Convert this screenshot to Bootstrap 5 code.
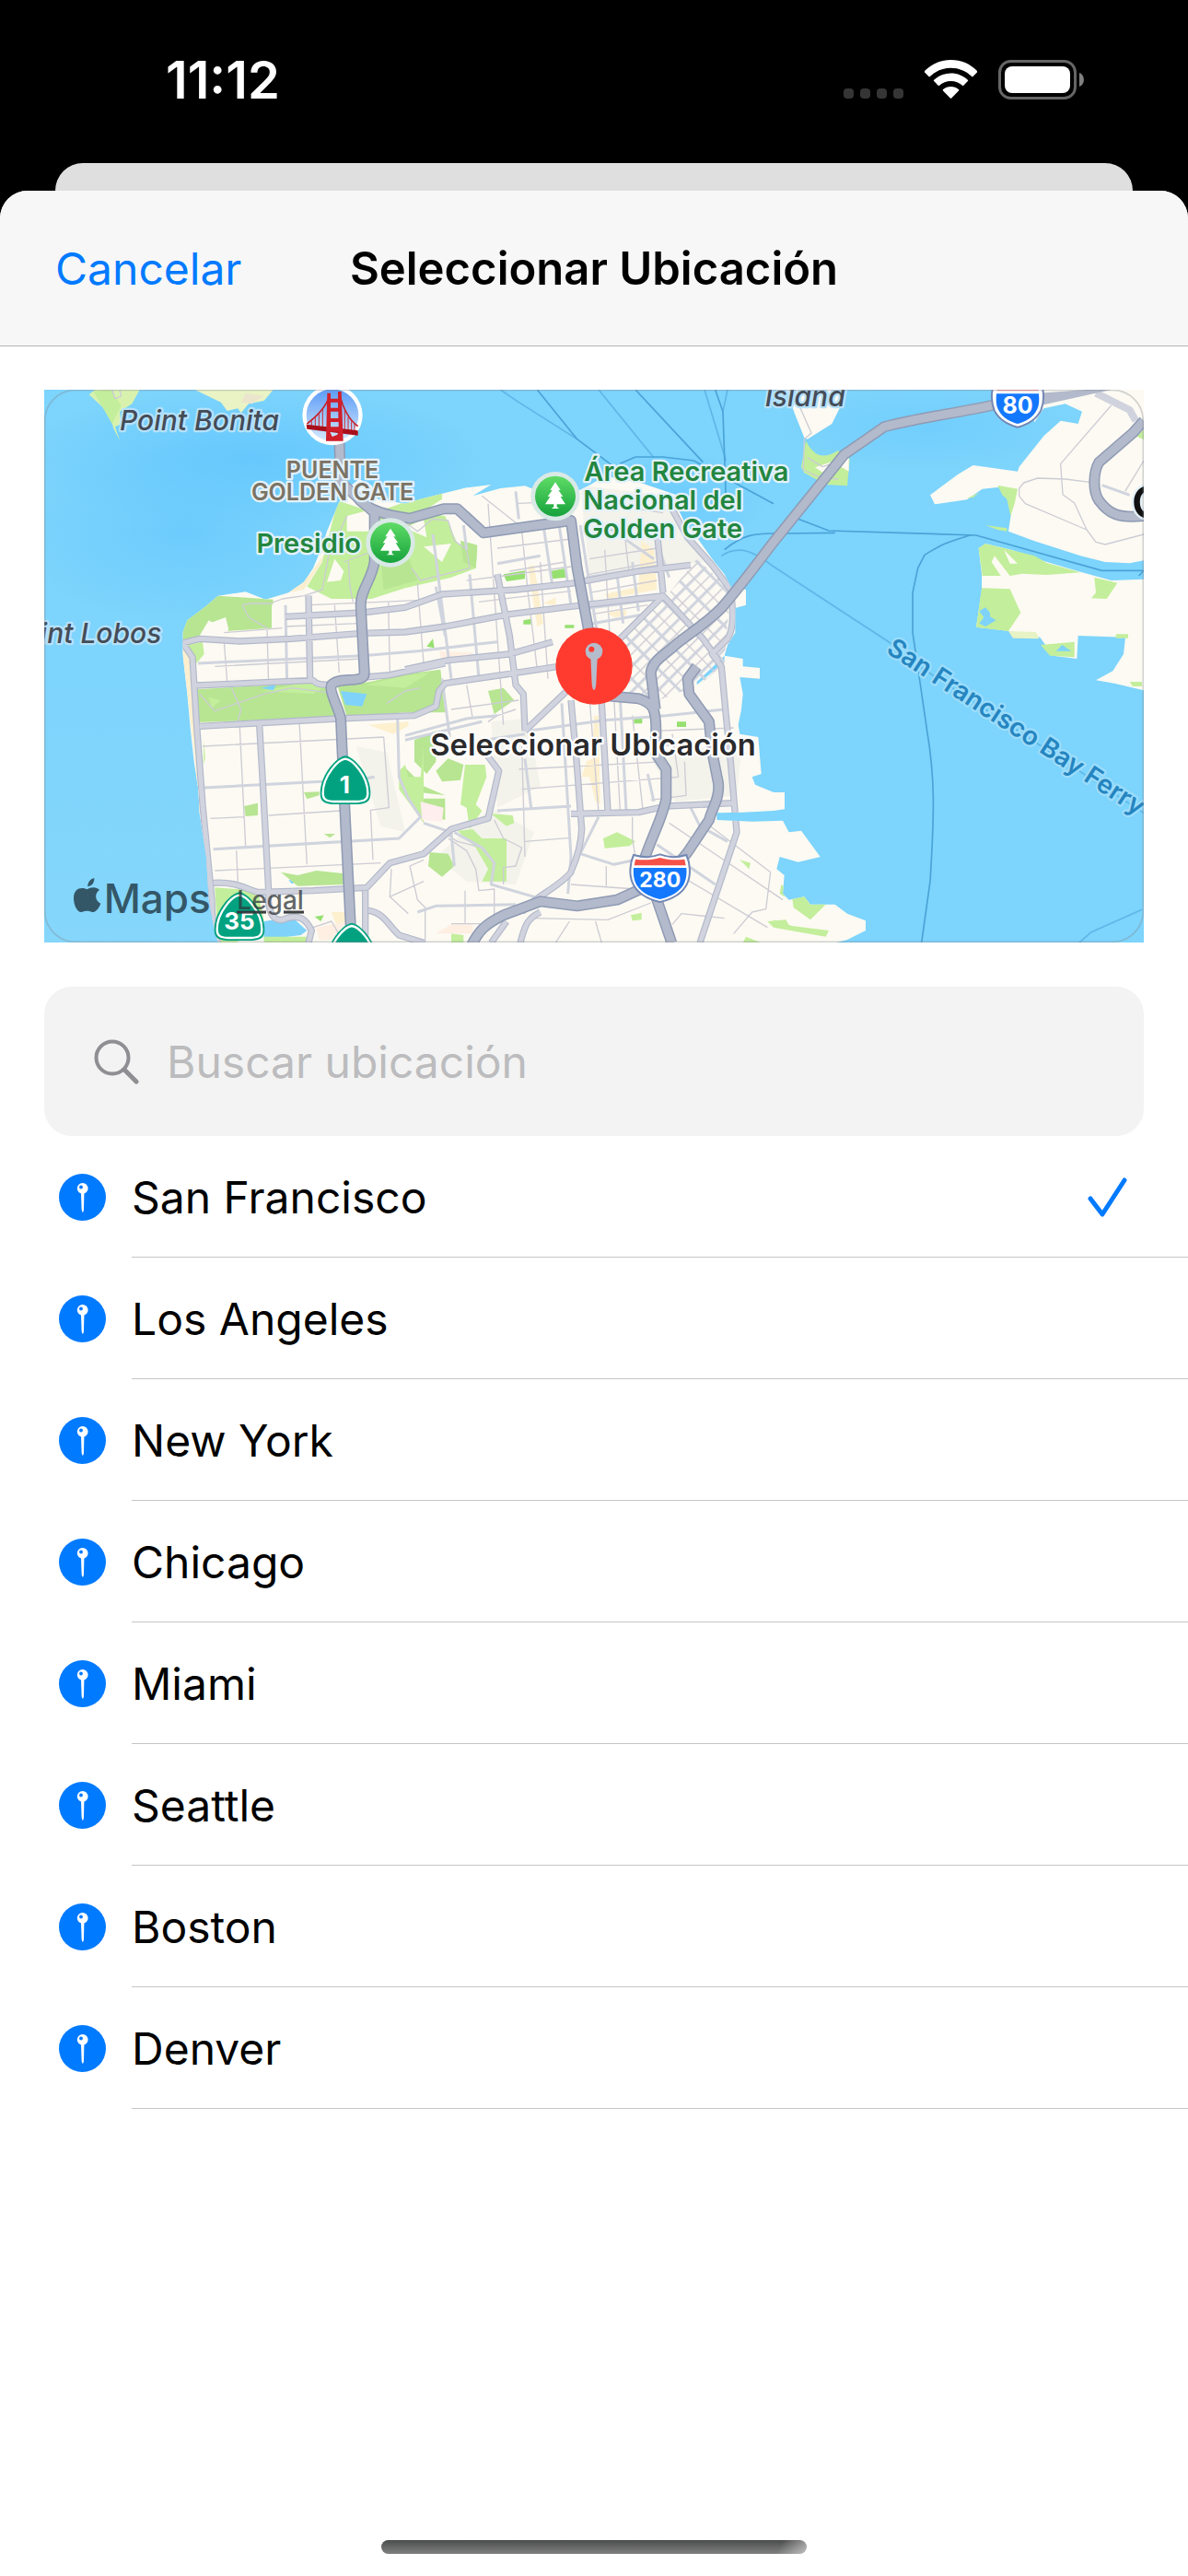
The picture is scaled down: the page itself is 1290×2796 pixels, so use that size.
<!DOCTYPE html>
<html lang="es">
<head>
<meta charset="utf-8">
<meta name="viewport" content="width=device-width, initial-scale=1">
<title>Seleccionar Ubicación</title>
<link href="https://cdn.jsdelivr.net/npm/bootstrap@5.3.0/dist/css/bootstrap.min.css" rel="stylesheet">
<style>
  :root { --tint: #007aff; --hairline: #c6c6c8; }
  body { background: #000; color: #000; font-family: Inter, "Liberation Sans", sans-serif; font-size: 48px; line-height: 60px; }
  .status-bar { height: 177px; padding: 0 113px 4px 180px; }
  .clock { font-size: 56px; font-weight: 600; }
  .status-icons { gap: 23px; }
  .sheet-behind { height: 60px; margin: 0 60px -30px; background: #dfdfdf; border-radius: 30px 30px 0 0; }
  .sheet { border-radius: 30px 30px 0 0; overflow: hidden; position: relative; }
  .sheet-nav { display: grid; grid-template-columns: 1fr auto 1fr; height: 169px; padding: 2px 60px 0; background: #f7f7f7; border-bottom: 1px solid #b2b2b4; }
  .btn-cancel { justify-self: start; color: var(--tint); font-size: 48px; line-height: 60px; }
  .sheet-title { font-size: 49px; line-height: 60px; font-weight: 600; }
  .sheet-body { padding: 47px 48px 0; }
  .map-view { display: block; width: 100%; height: auto; }
  .search-field { margin-top: 48px; height: 162px; padding: 0 54px; gap: 30px; background: #f3f3f3; border-radius: 30px; }
  .search-field input { padding: 2px 0 0; font-size: 48px; line-height: 60px; color: #000; outline: 0; }
  .search-field input::placeholder { color: #bcbcbe; opacity: 1; }
  .place { height: 132px; padding: 0 0 0 64px; gap: 28px; background: #fff; border: 0; color: #000; text-align: left; }
  .place-text { border-bottom: 1px solid var(--hairline); padding: 2px 66px 0 0; }
  .home-bar { width: 462px; height: 15px; margin-bottom: 24px; border-radius: 8px; background: linear-gradient(115deg, transparent 93%, #ffffff80), linear-gradient(#4b4d4c, #808080); }

  .park { fill: #c3ee9b; } .park-dark { fill: #b7e592; } .shop { fill: #fdf0cf; } .land { fill: #fcfaf2; } .lake { fill: #7fd3fb; }
  .rd { fill: none; stroke-linejoin: round; }
  .thin { stroke: #cdccd5; stroke-width: 4; }
  .minor { stroke: #d0d4de; stroke-width: 9; }
  .ferry { fill: none; stroke: #4aa3d8; stroke-width: 5; stroke-linejoin: round; }
  .lbl { font-family: Inter, "Liberation Sans", sans-serif; font-weight: 600; paint-order: stroke; stroke: #e3f1fa; stroke-width: 14; stroke-linejoin: round; }
  .sea-lbl { font-size: 90px; font-style: italic; font-weight: 500; fill: #454c57; stroke: #b5e1fa; }
  .park-lbl { font-size: 87px; fill: #22863f; }
  .shield-lbl { font-family: Inter, "Liberation Sans", sans-serif; font-weight: 700; fill: #fff; text-anchor: middle; }
</style>
</head>
<body class="d-flex flex-column min-vh-100">

<svg width="0" height="0" class="position-absolute" aria-hidden="true">
  <symbol id="pin" viewBox="0 0 51 51">
    <circle cx="25.500" cy="25.500" r="25.500" fill="#007aff"/>
    <path d="M24 21h3.400l-.4 17c-.2 5-2.100 5-2.400 0z" fill="#fff"/>
    <circle cx="25.700" cy="15.800" r="5.900" fill="#fff"/>
    <circle cx="24" cy="14.500" r="1.900" fill="#007aff"/>
  </symbol>
</svg>

<header class="status-bar d-flex align-items-center justify-content-between text-white">
  <span class="clock">11:12</span>
  <div class="status-icons d-flex align-items-center">
    <svg width="65" height="43" viewBox="0 0 65 43" fill="#353535" aria-hidden="true"><rect y="31" width="11" height="11" rx="4"/><rect x="18" y="31" width="11" height="11" rx="4"/><rect x="36" y="31" width="11" height="11" rx="4"/><rect x="54" y="31" width="11" height="11" rx="4"/></svg>
    <svg width="57" height="43" viewBox="0 0 57 43" fill="#fff" aria-hidden="true">
      <path d="M28.500 0C39.600 0 49.700 4.300 57 12c.4.400.4 1 0 1.400l-4.500 4.700c-.4.400-.9.400-1.300 0C45.200 12.200 37.200 8.800 28.500 8.800S11.800 12.200 5.800 18.100c-.4.400-.9.400-1.300 0L0 13.400c-.4-.4-.4-1 0-1.400C7.300 4.300 17.400 0 28.500 0z"/>
      <path d="M28.500 14.600c7.100 0 13.500 2.700 18.300 7.100.5.400.5 1 .1 1.400l-4.600 4.700c-.4.400-.9.400-1.300 0-3.400-3-7.700-4.700-12.500-4.700S19.400 24.800 16 27.800c-.4.400-.9.400-1.300 0l-4.600-4.700c-.4-.4-.4-1 .1-1.400 4.800-4.400 11.200-7.100 18.300-7.100z"/>
      <path d="M28.500 29c3.200 0 6.100 1.100 8.400 3 .5.400.5 1 .1 1.400l-7.800 8.100c-.4.400-1 .4-1.400 0L20 33.400c-.4-.4-.4-1 .1-1.400 2.300-1.900 5.200-3 8.400-3z"/>
    </svg>
    <svg width="93" height="43" viewBox="0 0 93 43" aria-hidden="true"><rect x="1.500" y="1.500" width="82" height="40" rx="12" fill="none" stroke="#666" stroke-width="3"/><rect x="7" y="7" width="71" height="29" rx="8" fill="#fff"/><path d="M88 14c6.500 2 6.500 13 0 15z" fill="#808080"/></svg>
  </div>
</header>
<div class="sheet-behind"></div>

<main class="sheet bg-white d-flex flex-column flex-grow-1">
  <div class="sheet-nav align-items-center">
    <button type="button" class="btn btn-cancel border-0 p-0">Cancelar</button>
    <h1 class="sheet-title m-0">Seleccionar Ubicación</h1>
  </div>

  <div class="sheet-body">
    <svg class="map-view" viewBox="24 39 3582 1800" role="img" aria-label="Mapa de San Francisco">
      <defs>
        <radialGradient id="sea"><stop offset="0" stop-color="#66c8fd"/><stop offset="1" stop-color="#66c8fd" stop-opacity="0"/></radialGradient>
        <linearGradient id="shoal" x2="0" y2="1"><stop offset="0" stop-color="#8bd8fa" stop-opacity="0"/><stop offset="1" stop-color="#8bd8fa"/></linearGradient>
        <linearGradient id="tree" x2="0" y2="1"><stop offset="0" stop-color="#5fdc66"/><stop offset="1" stop-color="#16a23c"/></linearGradient>
        <linearGradient id="sky" x2="0" y2="1"><stop offset="0" stop-color="#5b9bf5"/><stop offset="1" stop-color="#d6eaff"/></linearGradient>
        <clipPath id="coast"><path d="M985 405L970 440 945 500 925 560 900 620 870 665 820 700 770 715 745 722 680 697 590 710 550 745 490 790 475 830 475 900 490 1030 500 1140 512 1250 526 1340 530 1420 552 1560 560 1700 575 1780 590 1840H2600L2640 1830 2700 1800V1768L2640 1745 2600 1715 2520 1715 2500 1690 2450 1700 2430 1680 2435 1620 2410 1600 2420 1560 2480 1577 2552 1560 2490 1475 2450 1480 2430 1442 2330 1445 2215 1440V1417L2300 1415 2400 1410 2436 1405V1350L2400 1350 2340 1325 2330 1300 2360 1290 2350 1170 2290 1160 2285 1130 2295 1080 2300 1030 2290 975 2355 980V945L2300 940V915L2240 905 2250 870 2275 830V750L2310 740V690L2260 680 2240 640 2200 590 2150 520 2110 470 2090 430 2080 380 2020 360 1960 340 1850 320 1800 350 1770 365 1700 370 1640 372 1590 352 1510 360 1420 385 1480 348 1400 358 1330 375 1250 395 1200 410 1110 395 1090 350 1050 330 1000 370Z"/></clipPath>
        <clipPath id="soma"><path d="M2040 725L2150 590 2260 690 2245 850 2240 930 2160 1000 2000 1060 1880 1000 1880 880Z"/></clipPath>
        <pattern id="blocks" width="84" height="58" patternUnits="userSpaceOnUse" patternTransform="rotate(-45)"><path d="M0 5H84" stroke="#cfd3de" stroke-width="9"/><path d="M0 34H84M44 0V58" stroke="#cdccd5" stroke-width="4"/><path d="M5 0V58" stroke="#cfd3de" stroke-width="9"/></pattern>
        <g id="treepin"><circle r="80" fill="#d9e9e6"/><circle r="66" fill="url(#tree)"/><path d="M0-46L17-20H10L25 1H17L33 26H5V35L13 40H-13L-5 35V26H-33L-17 1H-25L-10-20H-17Z" fill="#fff"/></g>
        <g id="state"><path d="M0-82C26-80 82-22 82 40 82 66 70 74 40 76H-40C-70 74-82 66-82 40-82-22-26-80 0-82Z" fill="#02a280"/><path d="M0-72C22-70 73-18 73 40 73 60 62 66 38 67H-38C-62 66-73 60-73 40-73-18-22-70 0-72Z" fill="none" stroke="#fff" stroke-width="7"/></g>
        <g id="interstate"><path d="M-86-76C-50-66-30-68 0-78 30-68 50-66 86-76 98-50 102-10 88 18 70 56 30 70 0 77-30 70-70 56-88 18-102-10-98-50-86-76Z" fill="#fff" stroke="#7287b4" stroke-width="6"/><path d="M-80-62C-50-58-25-60 0-67 25-60 50-58 80-62L84-42H-84Z" fill="#f65248"/><path d="M-86-34H86C88-10 84 8 76 22 58 50 25 62 0 68-25 62-58 50-76 22-84 8-88-10-86-34Z" fill="#1478fe"/></g>
        <path id="freeways" d="M985 200L990 340 1100 440V600C1090 660 1055 690 1055 740L1067 960C1070 1000 985 970 960 1000 950 1020 985 1080 990 1110L1003 1400 1025 1840M1040 385C1080 440 1160 450 1215 458L1325 427H1370L1455 505 1740 465 1760 620 1795 810 1815 940M1850 1035L1960 1045C2010 1060 2018 1080 2017 1160V1225L2050 1275V1370C2040 1430 2000 1500 1975 1580L2020 1700 2068 1840M2000 1650L1890 1700 1760 1720 1640 1705 1520 1750C1460 1780 1440 1800 1415 1850M2060 1620L2120 1545 2190 1440C2200 1400 2225 1370 2220 1320L2200 1220 2190 1120 2125 1030 2120 980 2150 940M2015 1080L2000 960C2005 920 2050 900 2080 870 2130 830 2180 800 2230 750 2300 670 2380 560 2400 535L2630 250 2760 160C2870 130 3000 115 3110 90L3250 60M3606 140L3570 180 3460 275C3440 310 3440 370 3460 400 3490 440 3520 460 3606 450"/>
        <path id="avenues" d="M470 865L530 850 660 858 830 850 1060 832 1200 828 1330 810 1540 770 1740 745 2040 710M480 870L507 910 520 1120 540 1390 570 1700C570 1760 575 1800 590 1840M520 1002L900 985C910 1000 930 1000 960 1000M1070 975L1150 968 1330 930M530 1135L980 1110 1230 1100 1300 1070 1310 1020 1330 995 1500 970 1700 940M725 1130L735 1300 755 1670M575 1645C650 1640 680 1665 720 1675L900 1670 1075 1660 1150 1580 1260 1550 1350 1470 1470 1435 1505 1280 1460 1220M1070 1670V1840M1080 1735C1130 1740 1150 1790 1180 1815L1260 1840M755 1670C750 1740 770 1770 800 1765 860 1740 880 1770 895 1800L885 1840M810 778L1060 765 1200 748 1320 705 1560 690 1740 670 1960 630 2130 610M885 710L890 985M1200 950L1340 920 1540 900 1680 860M1500 640L1540 840 1560 1000 1585 1030 1590 1150M1590 1150L1800 950 2040 710 2170 850 2220 920M2020 500L2040 700M2060 410L2120 520 2200 610 2260 690C2270 770 2270 820 2250 850L2200 900 2230 940 2245 1100 2260 1250 2280 1480 2160 1840M1740 1050L1760 1270 1775 1470C1770 1560 1740 1600 1740 1610 1700 1660 1620 1690 1580 1740M1840 1060L1860 1410M1740 1420L1960 1415 2050 1395 2270 1385M1640 1740C1600 1760 1590 1780 1575 1840M1530 1770L1480 1840"/>
      </defs>

      <!-- water -->
      <path d="M0 0H3640V1860H0Z" fill="#7dd4fc"/>
      <ellipse cx="700" cy="260" rx="760" ry="230" fill="url(#sea)"/>
      <ellipse cx="480" cy="500" rx="560" ry="300" fill="url(#sea)" opacity=".7"/>
      <ellipse cx="2900" cy="160" rx="500" ry="140" fill="url(#sea)" opacity=".5"/>
      <ellipse cx="2080" cy="400" rx="300" ry="160" fill="url(#sea)" opacity=".7"/>
      <path d="M24 1000H600V1840H24Z" fill="url(#shoal)" opacity=".6"/>

      <!-- ferry lines -->
      <path class="ferry" d="M1630 39L1760 200 1880 290M1950 39L2170 275M1900 280L1950 258H2040L2140 270 2400 410M2210 39L2235 110 2245 400M2480 460L2580 498 3060 513 3470 628H3606L3590 645M2440 507L2600 505M2240 560C2300 510 2340 507 2400 507M3040 513C2970 535 2950 540 2892 577L2870 620 2853 700V830L2868 930 2900 1150C2925 1300 2925 1400 2910 1640L2882 1840"/>
      <path class="ferry" opacity=".6" d="M1510 39L1570 80 1760 200M1830 39L2010 260M2175 39L2245 270M2250 39L2235 110M2230 580C2290 540 2340 570 2400 615L2790 870M2860 930L3606 1418M3395 1840L3435 1805 3600 1732"/>

      <!-- marin headlands -->
      <path d="M170 55L190 39H335L310 85 270 110 275 150 255 160 270 205 250 165 235 115Z" fill="#d8f2ae"/>
      <path d="M185 45L240 39 275 90 245 150Z" class="park"/>
      <path d="M515 39H770L740 75 690 85 665 115 655 100 620 108 600 80Z" fill="#e9f3c4"/>
      <path d="M680 50L740 60 700 85 665 80Z" fill="#ebe5cd"/>
      <path class="rd thin" d="M245 39L255 68 275 60 270 39"/>

      <!-- treasure island -->
      <path class="land" d="M2440 39L2470 120 2500 195 2510 200 2590 150 2620 90 2640 39Z"/>
      <path class="park" d="M2505 205C2530 255 2560 268 2610 237L2648 265 2640 352 2570 348 2500 310 2490 290Z"/>
      <path class="land" d="M2535 292L2600 270 2645 240V305L2620 290 2570 315Z"/>
      <path class="rd thin" d="M2470 60L2523 180 2500 200 2497 300 2540 320 2610 330M2510 260L2560 290 2620 270"/>

      <!-- east bay -->
      <path class="land" d="M3230 39L3250 145 3280 100 3350 85 3405 110 3392 150 3335 140 3280 190 3200 290 3195 305 3050 285 3000 315 2910 382 2925 412 3030 397 3080 362 3150 355 3180 400 3165 500 3250 532 3400 580 3480 600 3560 604 3606 595V39Z"/>
      <path class="park" d="M3130 350L3195 362 3185 410 3172 450 3160 395 3145 382ZM3090 480L3160 490V500L3130 495ZM3030 392L3070 375 3050 390ZM3580 190L3606 170V202Z"/>
      <path class="rd thin" d="M3500 90L3335 280 3342 380 3380 408 3420 495 3450 535 3480 543 3606 510M3420 495L3220 410 3200 385V360L3215 342 3260 327 3350 330 3430 340M3606 270L3545 370"/>
      <path class="rd minor" d="M3470 350L3560 382"/>
      <path class="rd" stroke="#d0d3de" stroke-width="24" d="M3450 50L3560 105 3580 140"/>
      <path class="land" d="M3068 555L3090 540 3180 562 3290 600 3400 632 3500 660 3606 656V1018L3510 995 3450 985 3505 955 3540 900 3546 845 3392 840 3388 915 3310 905 3268 845 3170 825 3060 812 3078 690V640Z"/>
      <path class="park" d="M3068 555L3090 540 3250 580 3290 603 3400 634 3290 642 3210 638 3170 645 3120 580 3110 600 3140 645H3080ZM3078 685L3170 688 3205 765 3165 825 3060 812ZM3445 650L3520 668 3485 720 3435 718 3450 700ZM3270 870L3380 860V910L3300 905ZM3515 835H3555V848H3515ZM3560 990H3600V1005H3570Z"/>
      <path fill="#e7f3c4" d="M3165 825L3255 828 3265 850 3180 848Z"/>
      <path class="land" d="M3150 560L3195 605 3170 605Z"/>
      <path class="lake" d="M3070 760L3090 748 3105 765V778L3125 790 3090 810 3070 800 3085 780ZM3320 890L3340 870 3370 890Z"/>

      <!-- san francisco -->
      <g clip-path="url(#coast)">
        <path class="land" d="M400 300H2750V1840H400Z"/>
        <path fill="#f0f0e8" opacity=".7" d="M1040 1200L1140 1220 1200 1480 1120 1460ZM1480 1120L1600 1110 1640 1330 1500 1400ZM1300 1560L1480 1400 1620 1480 1560 1650 1400 1640ZM2000 1240L2300 1180 2280 1360 2080 1380ZM1770 350L2020 380 2180 600 1800 640Z"/>
        <path fill="#fbefcf" d="M985 400L960 540 890 640 820 700 870 690 930 600 990 480ZM470 860L515 1240 528 1420 540 1420 500 900Z"/>
        <path class="park" d="M980 400L1100 440 1240 390 1320 370 1320 395 1250 440 1330 450 1370 540 1435 560 1430 620 1350 650 1200 685 1090 720H960L880 680 930 600Z"/>
        <path class="park-dark" d="M1120 590L1200 560 1240 660 1130 690ZM1380 530L1435 545 1430 620 1390 600Z"/>
        <path class="land" d="M1010 450L1085 430V500H1010ZM970 590L1000 630 990 660 945 665ZM1260 550L1350 540 1320 600ZM1200 490L1260 460 1270 520Z"/>
        <path class="park-dark" d="M475 800L590 710 770 722 765 815 620 825 560 790 530 840 475 860Z"/>
        <path class="land" d="M765 740L820 700 900 690V850H765ZM560 800L615 780 625 820 600 850H550Z"/>
        <path class="park" d="M490 870L540 860 545 900 520 930Z"/>
        <path class="park-dark" d="M522 1015L880 992 960 1005 985 1105 528 1122ZM980 1005L1085 990 1200 965 1315 950 1330 1090 1200 1090 1010 1103Z"/>
        <path class="park" d="M730 1020L880 992 940 1005 900 1030ZM1070 1000L1200 970 1280 960 1200 1010ZM560 1040L600 1050 570 1075Z"/>
        <path class="lake" d="M730 1010L780 998 770 1018ZM990 1020L1075 1030 1060 1070 1005 1065ZM820 1635L850 1640 830 1648ZM740 1770L830 1755 880 1800 860 1815 740 1830ZM2150 990L2240 905V925L2150 1000ZM1200 1340H1240L1230 1355H1200Z"/>
        <path class="park-dark" d="M795 1610L850 1620 910 1605 1005 1615V1650L850 1655ZM675 1395L720 1385V1425L680 1428ZM870 1350L920 1348V1360L880 1372ZM935 1485H972L955 1498ZM1280 1545L1340 1550 1360 1590 1320 1625 1275 1590ZM1470 1020L1520 1010 1555 1050 1490 1095ZM1230 1180L1300 1150V1250L1270 1290 1230 1250ZM1200 1270L1260 1330 1330 1360 1200 1345ZM1300 1280L1340 1240 1390 1260 1380 1310 1320 1315ZM1240 1370L1330 1370 1330 1440 1250 1420Z"/>
        <path class="park" d="M1180 1280L1200 1260 1210 1300 1250 1300 1260 1200V1450L1180 1340ZM1395 1260L1460 1260 1465 1300 1430 1390 1450 1410 1410 1470 1400 1400 1380 1390ZM1480 1420L1550 1425 1555 1450 1530 1460ZM1370 1475L1420 1470 1450 1500 1530 1500V1640L1450 1640 1470 1600 1430 1530ZM1845 1500L1890 1480 1950 1510 1930 1525 1850 1532ZM580 1660L720 1670 740 1770 650 1840H590ZM740 1820L880 1820V1840H740ZM1935 1750L1970 1742V1765L1940 1768ZM2380 1770L2440 1765 2460 1800 2400 1790ZM2310 1820L2360 1840H2300ZM2290 1570L2325 1580 2320 1600ZM2420 1560L2450 1580 2470 1600 2550 1595 2490 1612 2445 1600ZM2425 1650L2445 1665 2435 1690 2420 1680ZM2460 1690L2500 1680 2520 1715 2575 1710 2520 1765 2465 1725ZM2400 1765L2460 1785 2580 1800 2570 1820 2400 1790ZM545 1180L548 1240 542 1260ZM1350 1810L1390 1815V1840H1350Z"/>
        <path fill="#96e070" d="M1520 640L1590 628V655L1530 663ZM1670 630L1725 620V650L1680 655ZM1585 790L1610 785V803H1585ZM1945 1110H1972V1126H1945ZM2085 1120H2115V1137H2085ZM1720 805H1750V815H1720ZM1270 875L1290 850 1295 880ZM905 1755L935 1750 925 1770Z"/>
        <path class="shop" d="M1970 530L2010 560 2020 690 1860 720 1850 705 1960 680ZM1600 615L1620 610 1650 800 1630 810ZM1650 735L1690 715V740ZM1855 765L1920 755V775L1880 780ZM1815 1100L1830 1100 1835 1390 1820 1380 1800 1300 1775 1300 1790 1250 1810 1240ZM1645 1080L1700 1030 1690 1070ZM1080 1130L1210 1120V1135L1160 1160ZM960 1740H1010V1780H975Z"/>
        <path fill="#feefe2" d="M910 1790L1010 1770V1830H920ZM1310 890L1420 895 1410 920 1320 920ZM1350 1780H1420V1810H1300Z"/>
        <path fill="#ffeeee" d="M1250 1380L1325 1400 1320 1445 1255 1440Z"/>

        <path class="rd thin" d="M580 940L1060 915M610 860L620 990M660 1120L680 1525M750 820L755 1000M855 1120L880 1585M540 1200L1130 1170M565 1435L675 1430M755 1425L990 1410M580 1605L1120 1580M650 1540L655 1640M610 830L800 815M890 740L1240 725M890 775L1000 770M970 740L985 960M1145 730L1150 960M810 810L1050 800M1130 1170L1147 1400 1087 1408 1095 1570M1240 670L1260 930M1470 410L1520 1130M1400 660L1520 645 1740 615M1600 700L1630 950M1640 600L1665 980M1580 500L1600 700M1560 410L1740 400M1450 385L1570 480M1500 555L1740 525M1440 730L1560 715 1740 695M1540 630L1720 600M1800 590L2020 555M1800 640L2020 600M1850 560L1870 900M1910 470L1930 640M1800 700L2020 660M1810 770L1990 740M1780 400L2040 440M1700 900L1830 880M1340 1000L1560 970M1400 1000L1420 1110M1350 1080L1570 1050M1580 1200L1590 1560M1580 1340L2090 1300M1570 1275L2050 1250M1590 1510L1740 1498M1880 1040L1900 1410M1800 1040L1830 1415M1940 1100L1975 1415M2010 1150L2270 1140M2010 1200L2270 1185M2070 1160L2090 1300M2110 1250L2115 1360 2000 1375M2060 1450L2430 1700M1740 1650L1950 1665M1855 1590V1655M2060 1600L2380 1790M2180 1450L2390 1610 2375 1730 2330 1740 2270 1810M2070 1780L2100 1745 2240 1760M1260 1570L1215 1590 1240 1700 1265 1725V1840M1340 1500L1400 1540 1430 1600 1440 1670 1490 1665V1770M1340 1490L1370 1510 1450 1530M1490 1440L1520 1500 1580 1530 1560 1590 1520 1595V1650M1350 1778H1500M1395 1670V1775M1620 1760L1860 1765 2000 1710M1735 1770L1690 1840M1820 1770L1840 1840M1940 1430V1500L1950 1560M670 740L700 735 760 735 800 720 870 710 930 690 950 580 1010 450M670 740L690 780 750 815M1015 600L1020 680 1030 730M1000 600L1080 570M1200 470L1240 500 1290 460 1340 465 1360 530 1400 560 1410 620 1250 660 1220 620M530 1030L580 1085 740 1030 830 1010 950 1025M630 1000L665 1080 655 1120M1140 1060L1200 1020 1250 1010M1150 1690L1260 1640M1155 1600L1150 1690 1210 1745M900 1790L960 1770 1000 1840M1470 1120L1500 1100 1560 1080"/>
        <path class="rd minor" d="M525 930L1060 905 1240 890 1500 860M545 1335L930 1315M1020 1315L1100 1300M575 1535L1180 1500 1250 1430 1210 1370 1180 1300 1175 1105M810 740L815 1000M1290 510L1350 980M1390 480L1400 560M1560 370L1570 460M1650 480L1680 680M1700 470L1740 740M1500 605L1640 580M1410 640L1440 980M1320 980L1345 1170M1200 1165L1400 1110 1500 1100M1600 1150L1850 1115 2050 1100 2240 1080M1710 1060L1740 1560 1730 1680M1900 1040L1920 1410M1770 480L1830 860M1590 1240L1610 1400M1460 1180L1590 1160M1500 1410L1740 1395M1360 1590L1350 1480 1260 1450M1480 1420L1430 1450M1990 1290L2010 1380M1830 1430L1770 1550 1880 1585 1950 1570M2130 1400L2160 1460 2250 1510M2020 1520L2210 1650M1240 1740L1300 1720 1560 1715M1360 1480L1450 1530 1490 1580 1480 1650 1620 1690M1940 600L1960 760M1890 640L1910 800M1790 650L2040 610M1800 750L2030 720M1810 800L1980 770M1760 1000L1920 960M1200 1180L1450 1120M1850 480L2010 590M2000 480L2060 650M1300 680L1330 840"/>
        <path d="M1840 560H2280V1080H1840Z" fill="url(#blocks)" clip-path="url(#soma)"/>
        <use href="#avenues" fill="none" stroke="#b3b9ca" stroke-width="22" stroke-linejoin="round"/>
        <use href="#avenues" fill="none" stroke="#d1d3df" stroke-width="15" stroke-linejoin="round"/>
      </g>
      <use href="#freeways" fill="none" stroke="#8f9ab4" stroke-width="36" stroke-linejoin="round"/>
      <use href="#freeways" fill="none" stroke="#b2bacb" stroke-width="27" stroke-linejoin="round"/>
      <path d="M3200 55L3420 39H3500L3270 90Z" fill="#b2bacb"/>

      <!-- golden gate bridge -->
      <circle cx="963" cy="122" r="98" fill="#fff"/>
      <circle cx="963" cy="122" r="85" fill="url(#sky)"/>
      <path d="M880 150C920 120 945 90 955 55M880 158L1045 180M985 50C1000 110 1020 140 1046 158" fill="none" stroke="#c8202a" stroke-width="5"/>
      <path d="M895 140V165M907 130V166M919 118V166M931 100V168M1003 105V175M1014 128V176M1025 142V177M1035 150V178" stroke="#d22a32" stroke-width="3"/>
      <path d="M878 152L945 160 1046 172V188L940 175 880 167Z" fill="#a90f1b"/>
      <path d="M946 50H957V68H981V45H992L998 206H942ZM957 80V98H981V80ZM957 110V132H982V110ZM957 144V160H983V144ZM955 176L962 192 978 186 984 176Z" fill="#d01f2a" fill-rule="evenodd"/>

      <text class="lbl sea-lbl" x="270" y="170">Point Bonita</text>
      <text class="lbl sea-lbl" x="406" y="863" text-anchor="end">Point Lobos</text>
      <text class="lbl sea-lbl" x="2372" y="92">Island</text>
      <g class="lbl" font-size="75" text-anchor="middle" fill="#7b7364"><text x="963" y="326">PUENTE</text><text x="963" y="400">GOLDEN GATE</text></g>
      <text class="lbl park-lbl" x="1056" y="570" text-anchor="end">Presidio</text>
      <g class="lbl park-lbl"><text x="1783" y="335">Área Recreativa</text><text x="1780" y="428">Nacional del</text><text x="1780" y="521">Golden Gate</text></g>
      <use href="#treepin" x="1152" y="537"/>
      <use href="#treepin" x="1689" y="386"/>
      <text class="lbl" x="3566" y="460" font-size="150" fill="#111">Oakland</text>
      <text class="lbl" transform="translate(2764 893) rotate(33)" font-size="84" fill="#2585c0" style="stroke:#9bdcfb">San Francisco Bay Ferry</text>

      <use href="#interstate" x="2030" y="1630"/><text class="shield-lbl" x="2030" y="1658" font-size="69">280</text>
      <g transform="translate(3195 94)"><path d="M-76-76H76C86-50 88-20 76 12 60 44 26 60 0 67-26 60-60 44-76 12-88-20-86-50-76-76Z" fill="#fff" stroke="#7287b4" stroke-width="6"/><path d="M-68-56H68V-51H-68Z" fill="#f39a9a"/><path d="M-69-42H69C71-20 70-4 64 8 50 38 22 50 0 56-22 50-50 38-64 8-70-4-71-20-69-42Z" fill="#1478fe"/></g>
      <text class="shield-lbl" x="3195" y="118" font-size="75">80</text>
      <use href="#state" x="1005" y="1313"/><text class="shield-lbl" x="1003" y="1353" font-size="78">1</text>
      <use href="#state" x="660" y="1757"/><text class="shield-lbl" x="660" y="1796" font-size="78">35</text>
      <use href="#state" x="1026" y="1857"/>

      <circle cx="1815" cy="939" r="125" fill="#ff3b30"/>
      <circle cx="1815" cy="891" r="28" fill="#b5bccb"/>
      <path d="M1804 912H1826L1822 995C1820 1024 1810 1024 1808 995Z" fill="#b5bccb"/>
      <circle cx="1807" cy="884" r="9" fill="#ff3b30"/>
      <text class="lbl" x="1812" y="1230" font-size="98" text-anchor="middle" fill="#2a2a2c" style="stroke:#fff">Seleccionar Ubicación</text>

      <g fill="#345768">
        <path d="M165 1656C168 1638 176 1632 187 1629 188 1645 178 1657 165 1656ZM204 1668C188 1678 188 1703 208 1712 200 1732 190 1741 180 1740 170 1736 160 1734 148 1739 134 1744 120 1720 120 1694 120 1662 146 1657 163 1666 176 1658 194 1656 204 1668Z"/>
        <text x="218" y="1742" font-family="Inter, sans-serif" font-weight="500" font-size="132">Maps</text>
      </g>
      <a href="#legal"><text x="652" y="1730" font-family="Inter, sans-serif" font-weight="500" font-size="84" fill="#30363a" fill-opacity=".75" text-decoration="underline">Legal</text></a>
      <rect x="26" y="40" width="3578" height="1797" rx="100" fill="none" stroke="#808890" stroke-opacity=".35" stroke-width="5"/>
    </svg>

    <label class="search-field d-flex align-items-center">
      <svg class="flex-shrink-0" width="49" height="49" viewBox="0 0 49 49" fill="none" stroke="#8e8e93" stroke-width="4" stroke-linecap="round" aria-hidden="true"><circle cx="20" cy="20" r="17.500"/><path d="M33 33L46 46" stroke-width="5"/></svg>
      <input type="search" class="border-0 bg-transparent flex-grow-1" placeholder="Buscar ubicación" aria-label="Buscar ubicación">
    </label>
  </div>

  <div class="places d-flex flex-column">
    <button type="button" class="place d-flex align-items-center"><svg width="51" height="51" aria-hidden="true"><use href="#pin"/></svg><span class="place-text d-flex align-items-center justify-content-between flex-grow-1 h-100">San Francisco<svg width="43" height="43" viewBox="0 0 43 43" fill="none" stroke="#007aff" stroke-width="5" stroke-linecap="round" stroke-linejoin="round" aria-label="Seleccionado"><path d="M3 23L16 40 40 3"/></svg></span></button>
    <button type="button" class="place d-flex align-items-center"><svg width="51" height="51" aria-hidden="true"><use href="#pin"/></svg><span class="place-text d-flex align-items-center flex-grow-1 h-100">Los Angeles</span></button>
    <button type="button" class="place d-flex align-items-center"><svg width="51" height="51" aria-hidden="true"><use href="#pin"/></svg><span class="place-text d-flex align-items-center flex-grow-1 h-100">New York</span></button>
    <button type="button" class="place d-flex align-items-center"><svg width="51" height="51" aria-hidden="true"><use href="#pin"/></svg><span class="place-text d-flex align-items-center flex-grow-1 h-100">Chicago</span></button>
    <button type="button" class="place d-flex align-items-center"><svg width="51" height="51" aria-hidden="true"><use href="#pin"/></svg><span class="place-text d-flex align-items-center flex-grow-1 h-100">Miami</span></button>
    <button type="button" class="place d-flex align-items-center"><svg width="51" height="51" aria-hidden="true"><use href="#pin"/></svg><span class="place-text d-flex align-items-center flex-grow-1 h-100">Seattle</span></button>
    <button type="button" class="place d-flex align-items-center"><svg width="51" height="51" aria-hidden="true"><use href="#pin"/></svg><span class="place-text d-flex align-items-center flex-grow-1 h-100">Boston</span></button>
    <button type="button" class="place d-flex align-items-center"><svg width="51" height="51" aria-hidden="true"><use href="#pin"/></svg><span class="place-text d-flex align-items-center flex-grow-1 h-100">Denver</span></button>
  </div>

  <div class="home-bar mt-auto mx-auto"></div>
</main>

<script src="https://cdn.jsdelivr.net/npm/bootstrap@5.3.0/dist/js/bootstrap.bundle.min.js"></script>
</body>
</html>
